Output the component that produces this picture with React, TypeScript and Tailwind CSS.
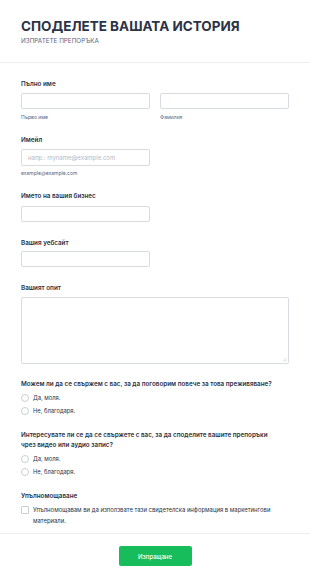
import React from "react";

const Label = ({ children, className = "" }: { children: React.ReactNode; className?: string }) => (
  <div className={`text-[6.3px] leading-[9px] font-semibold text-[#2c3345] ${className}`}>{children}</div>
);

const Input = ({ className = "", placeholder = "" }: { className?: string; placeholder?: string }) => (
  <div className={`h-[16px] rounded-[2px] border border-[#d7dbe4] bg-white flex items-center px-[6px] ${className}`}>
    <span className="text-[6px] text-[#b3b9c6]">{placeholder}</span>
  </div>
);

const Sub = ({ children, className = "" }: { children: React.ReactNode; className?: string }) => (
  <div className={`text-[5px] leading-[7px] text-[#57647e] ${className}`}>{children}</div>
);

const Radio = ({ label }: { label: string }) => (
  <div className="flex items-center gap-[4px] h-[9px]">
    <div className="w-[8px] h-[8px] rounded-full border border-[#c9ced9] bg-white" />
    <span className="text-[5.8px] leading-[8px] text-[#2c3345]">{label}</span>
  </div>
);

export default function App() {
  return (
    <div className="w-[310px] h-[582px] bg-white overflow-hidden" style={{ fontFamily: "Inter, 'Noto Sans', sans-serif" }}>
      <div className="px-[21px] pt-[18px] pb-[17px] border-b border-[#eceef3]">
        <div className="text-[13.5px] leading-[17px] font-bold text-[#2c3345]">СПОДЕЛЕТЕ ВАШАТА ИСТОРИЯ</div>
        <div className="text-[6.3px] leading-[8px] text-[#57647e] mt-[2px]">ИЗПРАТЕТЕ ПРЕПОРЪКА</div>
      </div>

      <div className="px-[21px] pt-[17px] pb-[7px] border-b border-[#eceef3]">
        <Label>Пълно име</Label>
        <div className="grid grid-cols-2 gap-[10px] mt-[4px]">
          <div>
            <Input />
            <Sub className="mt-[5px]">Първо име</Sub>
          </div>
          <div>
            <Input />
            <Sub className="mt-[5px]">Фамилия</Sub>
          </div>
        </div>

        <Label className="mt-[15px]">Имейл</Label>
        <Input className="mt-[4px] w-[129px] h-[17px]" placeholder="напр.: myname@example.com" />
        <Sub className="mt-[4px]">example@example.com</Sub>

        <Label className="mt-[15px]">Името на вашия бизнес</Label>
        <Input className="mt-[5px] w-[129px]" />

        <Label className="mt-[17px]">Вашия уебсайт</Label>
        <Input className="mt-[3px] w-[129px]" />

        <Label className="mt-[17px]">Вашият опит</Label>
        <div className="relative mt-[4px] h-[67px] rounded-[2px] border border-[#d7dbe4] bg-white">
          <svg className="absolute right-[1px] bottom-[1px]" width="5" height="5" viewBox="0 0 5 5">
            <path d="M4.5 1 L1 4.5 M4.5 3 L3 4.5" stroke="#b8bcc6" strokeWidth="0.6" />
          </svg>
        </div>

        <Label className="mt-[16px] font-medium whitespace-nowrap">Можем ли да се свържем с вас, за да поговорим повече за това преживяване?</Label>
        <div className="mt-[4px] flex flex-col gap-[4px]">
          <Radio label="Да, моля." />
          <Radio label="Не, благодаря." />
        </div>

        <Label className="mt-[15px] font-medium leading-[10px] pr-[20px]">
          Интересувате ли се да се свържете с вас, за да споделите вашите препоръки<br />чрез видео или аудио запис?
        </Label>
        <div className="mt-[4px] flex flex-col gap-[4px]">
          <Radio label="Да, моля." />
          <Radio label="Не, благодаря." />
        </div>

        <Label className="mt-[16px]">Упълномощаване</Label>
        <div className="mt-[4px] flex items-start gap-[4px]">
          <div className="w-[8px] h-[8px] mt-[1px] shrink-0 rounded-[1px] border border-[#c9ced9] bg-white" />
          <span className="text-[5.9px] leading-[11px] -mt-[1px] text-[#2c3345]">
            Упълномощавам ви да използвате тази свидетелска информация в маркетингови<br />материали.
          </span>
        </div>
      </div>

      <div className="flex justify-center pt-[12px]">
        <button className="w-[73px] h-[20px] rounded-[2px] bg-[#18bd5b] text-white text-[6px] font-medium">Изпращане</button>
      </div>
    </div>
  );
}
